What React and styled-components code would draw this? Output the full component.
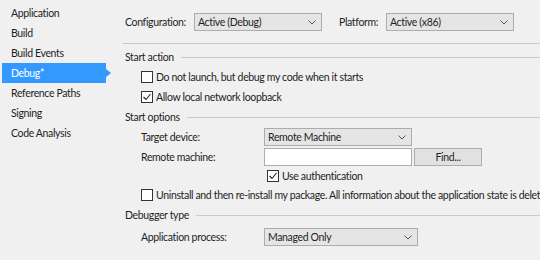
import React from "react";
import styled, { createGlobalStyle } from "styled-components";

const Global = createGlobalStyle`
  html, body { margin: 0; padding: 0; background: #f0f0f0; }
  body {
    font-family: Lato, "Liberation Sans", sans-serif;
    font-size: 10.5px;
    letter-spacing: -0.35px;
    color: #1e1e1e;
    overflow: hidden;
  }
`;

const Page = styled.div`
  display: flex;
  width: 540px;
  height: 260px;
  overflow: hidden;
  background: #f0f0f0;
`;

const Sidebar = styled.nav`
  width: 123px;
  flex: none;
  padding-top: 3px;
  box-sizing: border-box;
`;

const NavItem = styled.div`
  position: relative;
  height: 20px;
  line-height: 20px;
  margin-left: 2px;
  width: 104px;
  padding-left: 9px;
  box-sizing: border-box;
  white-space: nowrap;
  background: ${(p) => (p.$active ? "#3399ff" : "transparent")};
  color: ${(p) => (p.$active ? "#ffffff" : "#1e1e1e")};
  &::after {
    content: "";
    display: ${(p) => (p.$active ? "block" : "none")};
    position: absolute;
    right: -5px;
    top: 6px;
    border-top: 4px solid transparent;
    border-bottom: 4px solid transparent;
    border-left: 5px solid #3399ff;
  }
`;

const Main = styled.main`
  flex: 1;
  min-width: 0;
  white-space: nowrap;
`;

const Header = styled.div`
  display: flex;
  align-items: flex-start;
  height: 44px;
  padding-top: 13px;
  padding-left: 2px;
  box-sizing: border-box;
  border-bottom: 1px solid #c9c9c9;
  margin-bottom: 3px;
`;

const HeaderLabel = styled.span`
  width: ${(p) => p.$w}px;
  flex: none;
  line-height: 18px;
`;

const SelectBox = styled.div`
  position: relative;
  width: ${(p) => p.$w}px;
  height: 18px;
  flex: none;
  box-sizing: border-box;
  background: #e5e5e5;
  border: 1px solid #acacac;
  padding-left: 3px;
  line-height: 16px;
  color: #1e1e1e;
  margin-right: ${(p) => p.$mr || 0}px;
`;

const Chevron = styled.svg`
  position: absolute;
  right: 5px;
  top: 6px;
`;

const SectionHead = styled.div`
  display: flex;
  align-items: center;
  height: 20px;
  padding-left: 2px;
  gap: 7px;
`;

const SectionLine = styled.div`
  flex: 1;
  border-top: 1px solid #c9c9c9;
  margin-top: 1px;
`;

const Row = styled.div`
  display: flex;
  align-items: center;
  height: ${(p) => p.$h || 20}px;
  padding-left: ${(p) => p.$indent ?? 18}px;
  margin-top: ${(p) => p.$mt || 0}px;
`;

const FieldLabel = styled.span`
  width: 123px;
  flex: none;
`;

const Box = styled.span`
  width: 12px;
  height: 12px;
  box-sizing: border-box;
  border: 1px solid #333333;
  background: #ffffff;
  flex: none;
  margin-right: 3px;
  display: flex;
  align-items: center;
  justify-content: center;
`;

const TextInput = styled.div`
  width: 148px;
  height: 18px;
  box-sizing: border-box;
  background: #ffffff;
  border: 1px solid #abadb3;
  flex: none;
  margin-right: 2px;
`;

const Button = styled.div`
  width: 68px;
  height: 18px;
  box-sizing: border-box;
  background: #e1e1e1;
  border: 1px solid #adadad;
  text-align: center;
  line-height: 16px;
  flex: none;
`;

const Check = ({ checked }) => (
  <Box>
    {checked && (
      <svg width="10" height="10" viewBox="0 0 10 10">
        <polyline points="1.5,5 4,7.5 8.5,2" fill="none" stroke="#222" strokeWidth="1.1" />
      </svg>
    )}
  </Box>
);

const Select = ({ w, mr, children }) => (
  <SelectBox $w={w} $mr={mr}>
    {children}
    <Chevron width="8" height="5" viewBox="0 0 8 5">
      <polyline points="0.5,0.5 4,4 7.5,0.5" fill="none" stroke="#555" strokeWidth="1" />
    </Chevron>
  </SelectBox>
);

const navItems = [
  "Application",
  "Build",
  "Build Events",
  "Debug*",
  "Reference Paths",
  "Signing",
  "Code Analysis",
];

export default function App() {
  return (
    <>
      <Global />
      <Page>
        <Sidebar>
          {navItems.map((n) => (
            <NavItem key={n} $active={n === "Debug*"}>
              {n}
            </NavItem>
          ))}
        </Sidebar>
        <Main>
          <Header>
            <HeaderLabel $w={69}>Configuration:</HeaderLabel>
            <Select w={128} mr={17}>Active (Debug)</Select>
            <HeaderLabel $w={47}>Platform:</HeaderLabel>
            <Select w={128}>Active (x86)</Select>
          </Header>

          <SectionHead>
            <span>Start action</span>
            <SectionLine />
          </SectionHead>
          <Row>
            <Check />
            <span>Do not launch, but debug my code when it starts</span>
          </Row>
          <Row>
            <Check checked />
            <span>Allow local network loopback</span>
          </Row>

          <SectionHead>
            <span>Start options</span>
            <SectionLine />
          </SectionHead>
          <Row>
            <FieldLabel>Target device:</FieldLabel>
            <Select w={148}>Remote Machine</Select>
          </Row>
          <Row>
            <FieldLabel>Remote machine:</FieldLabel>
            <TextInput />
            <Button>Find...</Button>
          </Row>
          <Row $h={18} $indent={144}>
            <Check checked />
            <span>Use authentication</span>
          </Row>
          <Row>
            <Check />
            <span>
              Uninstall and then re-install my package. All information about the application state is deleted.
            </span>
          </Row>

          <SectionHead>
            <span>Debugger type</span>
            <SectionLine />
          </SectionHead>
          <Row $mt={2}>
            <FieldLabel>Application process:</FieldLabel>
            <Select w={154}>Managed Only</Select>
          </Row>
        </Main>
      </Page>
    </>
  );
}
